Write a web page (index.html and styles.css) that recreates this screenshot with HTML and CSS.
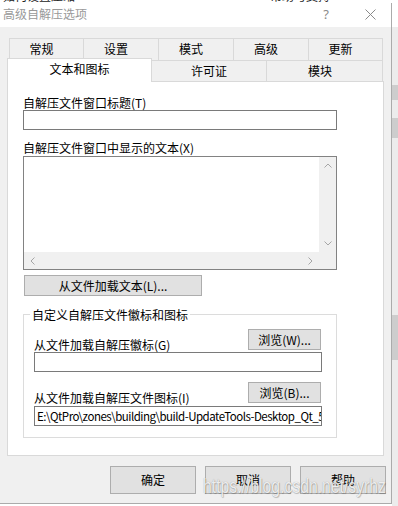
FILE: index.html
```html
<!DOCTYPE html>
<html lang="zh-CN">
<head>
    <meta charset="UTF-8">
    <title>高级自解压选项</title>
    <link rel="stylesheet" href="styles.css">
</head>
<body>
    <!-- bits of the window behind the dialog -->
    <div class="behind-top">
        <span class="frag frag-left">如何设置压缩</span>
        <span class="frag frag-right">帮助与支持</span>
    </div>

    <div class="desk">
        <div class="dialog">
            <div class="titlebar">
                <span class="title">高级自解压选项</span>
                <span class="help-btn">?</span>
                <svg class="close-btn" width="11" height="11" viewBox="0 0 11 11">
                    <path d="M0.5 0.5 L10.5 10.5 M10.5 0.5 L0.5 10.5" stroke="#8a8a8a" stroke-width="1" fill="none"/>
                </svg>
            </div>

            <div class="dialog-body">
                <div class="tab-row tab-row-back">
                    <div class="tab">常规</div>
                    <div class="tab">设置</div>
                    <div class="tab">模式</div>
                    <div class="tab">高级</div>
                    <div class="tab">更新</div>
                </div>
                <div class="tab-row tab-row-front">
                    <div class="tab tab-active">文本和图标</div>
                    <div class="tab tab-license">许可证</div>
                    <div class="tab tab-modules">模块</div>
                </div>

                <div class="panel">
                    <div class="field-label">自解压文件窗口标题(T)</div>
                    <div class="text-input input-wide"></div>

                    <div class="field-label label-text">自解压文件窗口中显示的文本(X)</div>
                    <div class="text-area">
                        <div class="area-content"></div>
                        <div class="vbar">
                            <div class="sb-btn">
                                <svg width="8" height="5" viewBox="0 0 8 5"><polyline points="0.5,4.5 4,1 7.5,4.5" fill="none" stroke="#a6a6a6"/></svg>
                            </div>
                            <div class="sb-btn">
                                <svg width="8" height="5" viewBox="0 0 8 5"><polyline points="0.5,0.5 4,4 7.5,0.5" fill="none" stroke="#a6a6a6"/></svg>
                            </div>
                        </div>
                        <div class="hbar">
                            <div class="sb-btn">
                                <svg width="5" height="8" viewBox="0 0 5 8"><polyline points="4.5,0.5 1,4 4.5,7.5" fill="none" stroke="#a6a6a6"/></svg>
                            </div>
                            <div class="sb-btn">
                                <svg width="5" height="8" viewBox="0 0 5 8"><polyline points="0.5,0.5 4,4 0.5,7.5" fill="none" stroke="#a6a6a6"/></svg>
                            </div>
                        </div>
                        <div class="corner"></div>
                    </div>

                    <button class="btn btn-load">从文件加载文本(L)...</button>

                    <div class="group">
                        <div class="group-title">自定义自解压文件徽标和图标</div>

                        <div class="group-row">
                            <span class="field-label">从文件加载自解压徽标(G)</span>
                            <button class="btn btn-browse">浏览(W)...</button>
                        </div>
                        <div class="text-input input-path"></div>

                        <div class="group-row row-icon">
                            <span class="field-label">从文件加载自解压文件图标(I)</span>
                            <button class="btn btn-browse">浏览(B)...</button>
                        </div>
                        <div class="text-input input-path input-filled">E:\QtPro\zones\building\build-UpdateTools-Desktop_Qt_5_12_3_MinGW_64_bit-Release\icon.ico</div>
                    </div>
                </div>

                <div class="actions">
                    <button class="btn btn-action">确定</button>
                    <button class="btn btn-action">取消</button>
                    <button class="btn btn-action">帮助</button>
                </div>
            </div>
        </div>

        <div class="side-strip">
            <div class="strip-block block-one"></div>
            <div class="strip-block block-two"></div>
            <div class="strip-block block-three"></div>
        </div>
    </div>

    <div class="watermark">https://blog.csdn.net/syrhz</div>
</body>
</html>
```

FILE: styles.css
```css
body {
    margin: 0;
    width: 398px;
    height: 506px;
    overflow: hidden;
    background: #fff;
    font-family: "Noto Sans CJK SC", "Noto Sans", sans-serif;
    font-size: 12px;
    color: #000;
}

/* window behind the dialog */
.behind-top {
    height: 3px;
    overflow: hidden;
    display: flex;
    line-height: 12px;
    color: #222;
}

.frag {
    margin-top: -10px;
}

.frag-left {
    margin-left: 3px;
}

.frag-right {
    margin-left: 195px;
}

.desk {
    display: flex;
    height: 503px;
}

/* dialog window */
.dialog {
    width: 392px;
    height: 501px;
    box-sizing: border-box;
    border-right: 1px solid #ababab;
    border-bottom: 1px solid #ababab;
    display: flex;
    flex-direction: column;
    background: #f0f0f0;
}

.titlebar {
    height: 24px;
    box-sizing: border-box;
    padding: 0 15px 3px 3px;
    background: #fff;
    display: flex;
    align-items: center;
}

.title {
    color: #999;
}

.help-btn {
    margin-left: auto;
    width: 10px;
    text-align: center;
    color: #8a8a8a;
    font-family: "Noto Sans", sans-serif;
    font-size: 13px;
}

.close-btn {
    margin-left: 34px;
    margin-top: 2px;
}

.dialog-body {
    flex: 1;
    padding-top: 11px;
}

/* tabs */
.tab {
    box-sizing: border-box;
    text-align: center;
    line-height: 20px;
    white-space: nowrap;
}

.tab-row-back {
    display: grid;
    grid-template-columns: 75px 75px 75px 75px 74px;
    margin-left: 9px;
    height: 22px;
}

.tab-row-back .tab {
    border-top: 1px solid #d9d9d9;
    border-right: 1px solid #d9d9d9;
    padding-right: 10px;
}

.tab-row-back .tab:first-child {
    border-left: 1px solid #d9d9d9;
}

.tab-row-front {
    display: flex;
    align-items: flex-end;
    margin-left: 7px;
    height: 21px;
}

.tab-active {
    width: 145px;
    height: 24px;
    margin-bottom: -1px;
    border: 1px solid #d9d9d9;
    border-bottom: none;
    background: #fff;
    position: relative;
    z-index: 1;
}

.tab-license,
.tab-modules {
    height: 21px;
    border-top: 1px solid #d9d9d9;
    border-right: 1px solid #d9d9d9;
}

.tab-license {
    width: 115px;
}

.tab-modules {
    width: 116px;
    padding-right: 9px;
}

/* tab page */
.panel {
    margin-left: 7px;
    width: 377px;
    height: 375px;
    box-sizing: border-box;
    border: 1px solid #d9d9d9;
    background: #fff;
    padding: 14px 0 0 15px;
}

.field-label {
    line-height: 14px;
    white-space: nowrap;
}

.label-text {
    margin-top: 11px;
}

.text-input {
    box-sizing: border-box;
    border: 1px solid #7a7a7a;
    background: #fff;
}

.input-wide {
    width: 314px;
    height: 20px;
}

.text-area {
    margin-top: 1px;
    width: 314px;
    height: 114px;
    box-sizing: border-box;
    border: 1px solid #828282;
    display: grid;
    grid-template-columns: 1fr 17px;
    grid-template-rows: 1fr 17px;
}

.area-content {
    background: #fff;
}

.vbar,
.hbar,
.corner {
    background: #f0f0f0;
}

.vbar {
    display: flex;
    flex-direction: column;
    justify-content: space-between;
}

.hbar {
    display: flex;
    justify-content: space-between;
}

.sb-btn {
    width: 17px;
    height: 17px;
    display: flex;
    align-items: center;
    justify-content: center;
}

/* buttons */
.btn {
    display: block;
    box-sizing: border-box;
    margin: 0;
    padding: 0;
    border: 1px solid #adadad;
    background: #e1e1e1;
    font: inherit;
    color: #000;
    line-height: 19px;
    white-space: nowrap;
}

.btn-load {
    margin-top: 5px;
    margin-left: 1px;
    width: 178px;
    height: 21px;
}

/* group box */
.group {
    margin-top: 18px;
    width: 314px;
    height: 124px;
    box-sizing: border-box;
    border: 1px solid #dcdcdc;
    padding-left: 10px;
}

.group-title {
    width: max-content;
    margin: -7px 0 0 -4px;
    padding: 0 2px;
    background: #fff;
    line-height: 14px;
}

.group-row {
    margin-top: 7px;
    width: 288px;
    height: 21px;
    display: flex;
    justify-content: space-between;
    align-items: flex-end;
}

.group-row .field-label {
    margin-bottom: -2px;
}

.row-icon {
    margin-top: 10px;
}

.btn-browse {
    width: 73px;
    height: 21px;
    margin-right: 1px;
}

.input-path {
    margin-top: 2px;
    width: 288px;
    height: 20px;
}

.input-filled {
    margin-top: 3px;
    padding-left: 2px;
    font-size: 11.5px;
    letter-spacing: -0.5px;
    line-height: 18px;
    overflow: hidden;
    white-space: nowrap;
}

/* dialog buttons */
.actions {
    display: flex;
    gap: 9px;
    margin-top: 10px;
    padding-left: 110px;
}

.btn-action {
    width: 86px;
    height: 28px;
    line-height: 26px;
}

/* other window at the right edge */
.side-strip {
    flex: 1;
    margin-top: 24px;
    background: #ececec;
}

.strip-block {
    background: #cdcdcd;
}

.block-one {
    margin-top: 58px;
    height: 15px;
}

.block-two {
    margin-top: 18px;
    height: 20px;
}

.block-three {
    margin-top: 177px;
    height: 45px;
}

/* blog watermark over the screenshot */
.watermark {
    position: absolute;
    left: 203px;
    top: 475px;
    font-family: "Liberation Sans", Arial, sans-serif;
    font-size: 21px;
    line-height: 21px;
    white-space: nowrap;
    transform: scaleX(0.75);
    transform-origin: left top;
    color: rgba(255, 255, 255, 0.85);
    text-shadow: 0 0 1px rgba(0, 0, 0, 0.35), 1px 1px 1px rgba(0, 0, 0, 0.2);
}
```
